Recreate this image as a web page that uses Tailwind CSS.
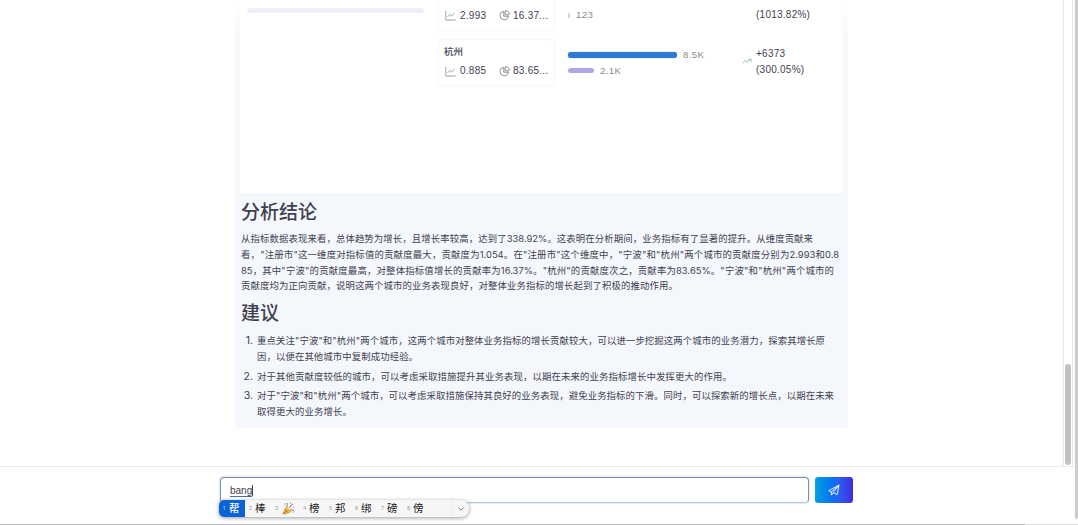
<!DOCTYPE html>
<html lang="zh-CN">
<head>
<meta charset="utf-8">
<title>指标分析</title>
<script src="https://cdn.jsdelivr.net/npm/@tailwindcss/browser@4"></script>
</head>
<body class="relative h-[525px] w-[1078px] overflow-hidden bg-white font-['Inter','Noto_Sans_CJK_SC',sans-serif] text-[#3f4152]">
<div class="flex h-[525px]">
  <div class="flex w-[1075px] flex-col">
    <div class="flex h-[467px] border-b border-[#ececec]">
      <main class="w-[1063px] pl-[235px]">
        <section class="h-[428px] w-[613px] rounded-b-[4px] bg-[#f4f7fb] px-[5px]">
          <div class="-mx-[5px] flex h-[193px] bg-linear-to-b pl-[5px] from-white via-[#f8f8f9] via-20% to-[#f5f7fa]">
            <div class="flex w-[602px] bg-white font-['Liberation_Sans','Noto_Sans_CJK_SC',sans-serif] text-[10px] leading-[16px] tracking-[.25px]">
              <div class="w-[198px] pl-[7px] pt-[8px]"><div class="h-[5px] w-[177px] rounded-sm bg-[#eeedf8]"></div></div>
              <div class="flex w-[117px] flex-col gap-[8px]">
                <div class="flex h-[31px] items-center rounded-b border-x border-b border-[#f7f7f7] pl-[6px] pt-px">
                  <svg class="h-[11px] w-[11px] shrink-0" viewBox="0 0 11 11" fill="none" stroke="#8b8b92" stroke-width=".8"><path d="M.8 1v9h10M2.5 7l2.4-2.6 1.7 1.4L9.7 3"/></svg>
                  <span class="ml-[4px] w-[39px]">2.993</span>
                  <svg class="h-[11px] w-[11px] shrink-0" viewBox="0 0 11 11" fill="none" stroke="#77777f" stroke-width=".8"><path d="M4.8 1.4a4.2 4.2 0 1 0 4.6 4.8H4.8z"/><path d="M6.2.7v4.1h4A4.1 4.1 0 0 0 6.2.7z"/></svg>
                  <span class="ml-[3px]">16.37...</span>
                </div>
                <div class="flex h-[47px] flex-col rounded border border-[#f7f7f7] pl-[6px] pt-[3px]">
                  <div class="-ml-px h-[18px] text-[9.5px] font-medium leading-[18px] tracking-normal">杭州</div>
                  <div class="flex h-[20px] items-center">
                    <svg class="h-[11px] w-[11px] shrink-0" viewBox="0 0 11 11" fill="none" stroke="#8b8b92" stroke-width=".8"><path d="M.8 1v9h10M2.5 7l2.4-2.6 1.7 1.4L9.7 3"/></svg>
                    <span class="ml-[4px] w-[39px]">0.885</span>
                    <svg class="h-[11px] w-[11px] shrink-0" viewBox="0 0 11 11" fill="none" stroke="#77777f" stroke-width=".8"><path d="M4.8 1.4a4.2 4.2 0 1 0 4.6 4.8H4.8z"/><path d="M6.2.7v4.1h4A4.1 4.1 0 0 0 6.2.7z"/></svg>
                    <span class="ml-[3px]">83.65...</span>
                  </div>
                </div>
              </div>
              <div class="flex w-[187px] flex-col pl-[13px] pt-[7px] text-[9.7px] tracking-[.35px] text-[#8b8b8b]">
                <div class="flex h-[16px] items-center gap-[6px]"><i class="h-[5px] w-[2px] rounded bg-[#d4d4da]"></i>123</div>
                <div class="mt-[24px] flex h-[16px] items-center gap-[6px]"><i class="h-[6px] w-[109px] rounded-full bg-[#2f7ad8] shadow-[0_0_1px_#2f7ad8]"></i>8.5K</div>
                <div class="flex h-[15px] items-center gap-[6px]"><i class="h-[5px] w-[26px] rounded-full bg-[#b0a5e8]"></i>2.1K</div>
              </div>
              <div class="flex w-[100px] pt-[7px]">
                <svg class="mt-[50px] mr-[4px] h-[8px] w-[10px] shrink-0" viewBox="0 0 10 8" fill="none" stroke="#9fc4b2" stroke-width="1"><path d="M.5 6 3.5 3.4 5 5.2 8.8 2.5M6.3 2.3h2.8v2.5"/></svg>
                <div class="whitespace-nowrap"><div class="h-[16px]">(1013.82%)</div><div class="mt-[23px] h-[16px]">+6373</div><div class="h-[16px]">(300.05%)</div></div>
              </div>
            </div>
          </div>
          <h2 class="mt-[6px] ml-[1px] h-[28px] text-[19px] font-medium leading-[28px]">分析结论</h2>
          <div class="mt-[4px] ml-[1px] whitespace-nowrap text-[9.4px] leading-[15.8px]">
            <p class="w-[572px] [text-align-last:justify]">从指标数据表现来看，总体趋势为增长，且增长率较高，达到了338.92%。这表明在分析期间，业务指标有了显著的提升。从维度贡献来</p>
            <p class="w-[598px] [text-align-last:justify]">看，"注册市"这一维度对指标值的贡献度最大，贡献度为1.054。在"注册市"这个维度中，"宁波"和"杭州"两个城市的贡献度分别为2.993和0.8</p>
            <p class="w-[593px] [text-align-last:justify]">85，其中"宁波"的贡献度最高，对整体指标值增长的贡献率为16.37%。"杭州"的贡献度次之，贡献率为83.65%。"宁波"和"杭州"两个城市的</p>
            <p class="w-[437px] [text-align-last:justify]">贡献度均为正向贡献，说明这两个城市的业务表现良好，对整体业务指标的增长起到了积极的推动作用。</p>
          </div>
          <h2 class="mt-[6px] ml-[1px] h-[28px] text-[19px] font-medium leading-[28px]">建议</h2>
          <ol class="mt-[5px] flex flex-col gap-[4px] whitespace-nowrap text-[9.4px] leading-[15.75px]">
            <li class="flex"><span class="w-[13px] text-right text-[10.5px]">1.</span><div class="ml-[4px]"><p class="w-[568px] [text-align-last:justify]">重点关注"宁波"和"杭州"两个城市，这两个城市对整体业务指标的增长贡献较大，可以进一步挖掘这两个城市的业务潜力，探索其增长原</p><p class="w-[161px] [text-align-last:justify]">因，以便在其他城市中复制成功经验。</p></div></li>
            <li class="flex"><span class="w-[13px] text-right text-[10.5px]">2.</span><p class="ml-[4px] w-[475px] [text-align-last:justify]">对于其他贡献度较低的城市，可以考虑采取措施提升其业务表现，以期在未来的业务指标增长中发挥更大的作用。</p></li>
            <li class="flex"><span class="w-[13px] text-right text-[10.5px]">3.</span><div class="ml-[4px]"><p class="w-[577px] [text-align-last:justify]">对于"宁波"和"杭州"两个城市，可以考虑采取措施保持其良好的业务表现，避免业务指标的下滑。同时，可以探索新的增长点，以期在未来</p><p class="w-[95px] [text-align-last:justify]">取得更大的业务增长。</p></div></li>
          </ol>
        </section>
      </main>
      <div class="w-[10px] border-x border-[#e8e8e8] px-[2px] pt-[364px]"><div class="ml-[-1px] h-[101px] w-[6px] rounded-sm bg-[#c1c1c1]"></div></div>
    </div>
    <footer class="flex h-[58px] gap-[6px] pl-[220px] pt-[10px]">
      <div class="h-[26px] w-[589px] rounded-[4px] border border-[#7f8da5] border-b-[#b4c5dc] pl-[9px] font-['Liberation_Sans',sans-serif] text-[10px] leading-[25px] shadow-[0_0_2px_#8dbdf0]"><span class="border-r border-[#444] underline decoration-[#4a6f9c] underline-offset-2">bang</span></div>
      <button class="flex h-[26px] w-[38px] items-center justify-center rounded-[3px] bg-linear-to-r from-[#08a0e0] via-[#126cf2] to-[#4027e2]">
        <svg class="h-[12px] w-[12px]" viewBox="0 0 12 12" fill="none" stroke="#fff" stroke-width=".9" stroke-linejoin="round"><path d="M11 1 .8 6.7l2.6 1.2L11 1 5.2 8.8l4 1.7zM3.4 7.9v3.2l1.8-2.3"/></svg>
      </button>
    </footer>
  </div>
  <div class="h-[519px] w-[3px] rounded-b bg-[#cdcdcd]"></div>
</div>
<div class="absolute bottom-0 left-0 h-px w-[1025px] bg-[#bcbcbc]"></div>
<div class="absolute bottom-0 right-0 h-px w-[53px] bg-[#dcdcdc]"></div>
<div class="absolute left-[219px] top-[500px] flex h-[17px] w-[250px] items-center overflow-hidden rounded-[5px] rounded-r-[8px] bg-[#f6f6f6] text-[10.5px] leading-[17px] text-[#222] shadow-[0_1px_4px_#0006]">
  <div class="flex h-full w-[26px] items-center bg-[#0b61d6] pl-[4px] font-medium text-white"><span class="w-[6px] text-[5px] text-[#b7d3f8]">1</span>帮</div>
  <div class="flex w-[27px] items-center pl-[4px]"><span class="w-[6px] text-[5px] text-[#999]">2</span>棒</div>
  <div class="flex w-[28px] items-center pl-[3px]"><span class="w-[6px] text-[5px] text-[#999]">3</span>
    <svg class="h-[14px] w-[14px]" viewBox="0 0 14 14"><path d="M1 13 5 4l6 6z" fill="#e9b44c"/><path d="M2.3 10.2 4.8 12M3.5 7.5l4 3.5" stroke="#a26b2c"/><path d="M6 5c-1-2 1-2 0-4M8 6c2-1 1-3 4-4M9 8c2-1 2 1 4 0" fill="none" stroke="#9a7054"/><path d="M3 2h1M9 1h1M12 5h1M12 10h1" stroke="#4c93c7" stroke-width="1.2"/></svg>
  </div>
  <div class="flex w-[26px] items-center pl-[3px]"><span class="w-[6px] text-[5px] text-[#999]">4</span>榜</div>
  <div class="flex w-[26px] items-center pl-[3px]"><span class="w-[6px] text-[5px] text-[#999]">5</span>邦</div>
  <div class="flex w-[26px] items-center pl-[3px]"><span class="w-[6px] text-[5px] text-[#999]">6</span>绑</div>
  <div class="flex w-[26px] items-center pl-[3px]"><span class="w-[6px] text-[5px] text-[#999]">7</span>磅</div>
  <div class="flex w-[48px] items-center pl-[3px]"><span class="w-[6px] text-[5px] text-[#999]">8</span>傍</div>
  <div class="flex h-full flex-1 items-center justify-center border-l border-[#ececec]"><svg class="h-[6px] w-[8px]" viewBox="0 0 8 6" fill="none" stroke="#777"><path d="m1.3 1.5 2.7 2.7 2.7-2.7"/></svg></div>
</div>
</body>
</html>
